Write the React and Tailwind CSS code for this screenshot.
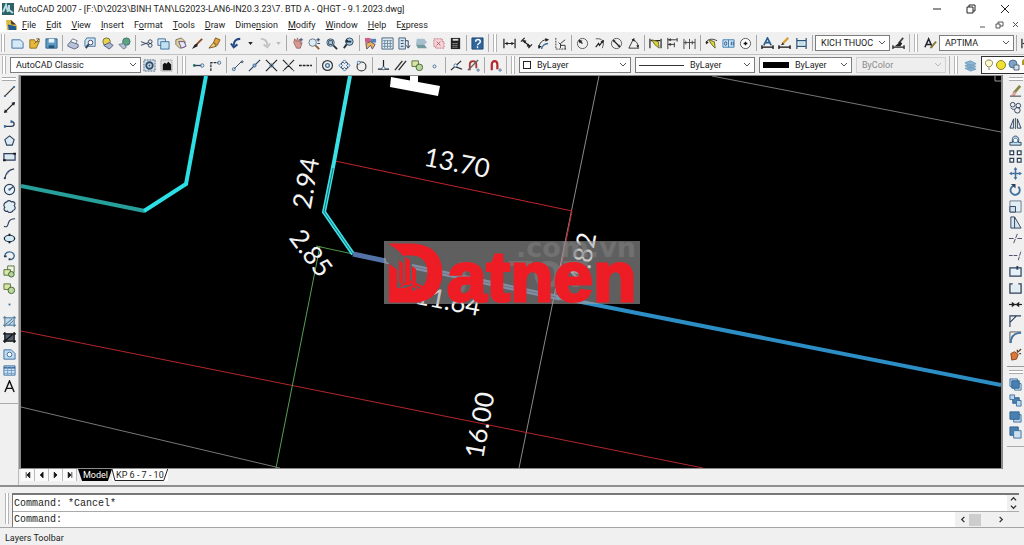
import React from "react";

const N = "#2b3f58";
const B = "#3f6f9f";
const L = "#bcd8ee";

const icons = {
  blank: <path d="M1 3h9l3 3v6H1z" fill="#d5e9f7" stroke={B} />,
  open: <><path d="M2 3h5l1 2h4l-3 7H2z" fill="#e6b93c" stroke="#8d6b1c" /><path d="M7 7l5-5M9 2h3v3" stroke="#6b5a20" /></>,
  save: <><path d="M1 2h12v10H1z" fill="#5e9bc4" stroke="#2d6189" /><path d="M4 2h6v4H4z" fill="#e8f3fa" /><path d="M4 9h6v3H4z" fill="#24557c" /></>,
  print: <><path d="M3 6l3-4 5 2-2 4z" fill="#fff" stroke="#66748c" /><path d="M1 8l3-3 8 3v3l-4 2-7-3z" fill="#b8c1d6" stroke="#5a6784" /></>,
  preview: <><path d="M3 1h9v9H1V4z" fill="#d3e6f5" stroke={B} /><circle cx="7" cy="6" r="2.5" fill="#fff" stroke="#446" /><path d="M5 8l-3 4" stroke="#345" strokeWidth="2" /></>,
  publish: <><circle cx="6" cy="5" r="4" fill="#e8d44c" stroke="#6b6f3c" /><path d="M3 9l6-3 4 3-4 4z" fill="#a9b6cf" stroke="#4c5873" /></>,
  globe: <><circle cx="9" cy="5" r="4" fill="#5aa57d" stroke="#3c6d7b" /><path d="M1 8l5-1 3 4-3 2z" fill="#b9c7d9" stroke="#62748c" /></>,
  cut: <><path d="M1 5l8 3M1 9l8-3" stroke={N} /><circle cx="11" cy="5" r="2" stroke={N} /><circle cx="11" cy="9" r="2" stroke={N} /></>,
  copy: <><path d="M1 2h8v7H1z" fill="#dcecf8" stroke={B} /><path d="M4 5h9v8H4z" fill="#c2e1ef" stroke={B} /></>,
  paste: <><path d="M2 3l6-2 4 4-1 6-5 1-4-4z" fill="#d9d49c" stroke="#77745c" /><path d="M5 5h6l2 5-5 2z" fill="#e1edf3" stroke="#748" /></>,
  brush: <><path d="M12 2L6 8" stroke="#8a4b22" strokeWidth="2" /><path d="M7 7l-3 1-3 5 6-3z" fill="#222" /></>,
  match: <><path d="M8 1l-2 5 4 3 3-6z" fill="#e0a33a" stroke="#85571c" /><path d="M6 6l-5 6 8-2z" fill="#f3d76c" stroke="#775020" /></>,
  undo: <path d="M11 2C6 2 4 5 4 9M1 7l3 4 4-3" stroke="#234a82" strokeWidth="2.2" />,
  redo: <path d="M3 2c5 0 7 3 7 7M13 7l-3 4-4-3" stroke="#c0c0c0" strokeWidth="2" />,
  pan: <><path d="M3 6l1-4 2 3 1-4 1 4 2-3v5l2-1-2 6H6z" fill="#d79a91" stroke="#a06a6a" /><path d="M11 1v4M9 3h4" stroke="#457" /></>,
  zoomrt: <><circle cx="5" cy="6" r="4" fill="#dcecf6" stroke="#678" /><path d="M8 9l4 4" stroke="#875f38" strokeWidth="2" /><path d="M9 3h4M11 1v4M10 7h3" stroke={N} /></>,
  zoomwin: <><circle cx="6" cy="6" r="4" fill="#b5d2e7" stroke="#456" /><path d="M9 9l4 4" stroke="#234" strokeWidth="2" /><path d="M4 4h4v4H4z" stroke="#345" /></>,
  zoomprev: <><circle cx="8" cy="5" r="4" fill="#aacbe4" stroke="#345" /><path d="M5 8l-3 4M4 5h6M4 5l2-2" stroke="#234" strokeWidth="2" /></>,
  props: <><path d="M1 1h6v5H1z" fill="#cf5f84" /><path d="M7 2h6v4H7z" fill="#5680b9" /><path d="M2 7l5-2 5 3-3 5-2-4-4 4z" fill="#e2b456" stroke="#644c72" /></>,
  grid: <><path d="M1 1h12v12H1z" fill="#e7eff5" stroke="#42607a" /><path d="M4 3v9M7 3v9M10 3v9M2 4h10M2 7h10M2 10h10" stroke="#6d8aa2" /></>,
  palette: <><path d="M1 1h7v12H1z" fill="#d5e5f1" stroke="#42607a" /><path d="M3 4h3M3 7h3M3 10h3M8 4h3v7M9 9l2 3 2-3" stroke={N} /></>,
  sheet: <><path d="M2 2h8l3 4-3 2H1z" fill="#a7bfce" /><path d="M1 8h9l3 4H3z" fill="#7299a0" /></>,
  markup: <><path d="M2 2h9v3h2v7H4v-2H2z" fill="#f4d3d6" stroke="#c37480" strokeDasharray="2 1" /><path d="M5 5l4 4M9 5L5 9" stroke="#b95a66" /></>,
  calc: <><path d="M2 1h10v12H2z" fill="#222" /><path d="M4 3h6" stroke="#ddd" strokeWidth="2" /><path d="M4 7h6M4 9h6M4 11h6" stroke="#ddd" strokeDasharray="1 1" /></>,
  help: <><path d="M1 1h12v12H1z" fill="#2f679d" stroke="#1c4573" /><path d="M5 5c0-3 5-3 5 0 0 2-3 2-3 4M7 10v2" stroke="#fff" strokeWidth="1.5" /></>,
  dimlin: <><path d="M1 2v10M13 2v10M2 7h10" stroke="#222" strokeWidth="1.3" /><path d="M2 7l3-2v4zM12 7L9 5v4z" fill="#222" /></>,
  dimali: <><path d="M1 5l4-4M9 12l4-4M3 4l8 6" stroke="#222" strokeWidth="1.3" /><path d="M3 3l4 1-2 3zM11 11L7 10l2-3z" fill="#222" /></>,
  dimarc: <><path d="M2 12C2 7 6 2 12 3" stroke="#222" /><path d="M5 13c0-3 3-6 7-6" stroke={B} strokeWidth="1.5" /><path d="M1 9l1 4 3-3zM13 3L9 1v4z" fill="#222" /></>,
  dimord: <><path d="M2 1v12h11" stroke="#333" strokeDasharray="2 1" /><path d="M7 12V7l5-4M5 6l3 3M7 9h5v4" stroke="#333" /></>,
  dimrad: <><circle cx="7" cy="7" r="5.5" stroke="#555" /><path d="M7 7L3 4" stroke="#222" strokeWidth="1.3" /><path d="M3 3l4 1-3 3z" fill="#222" /></>,
  dimjog: <><path d="M3 2c7-1 10 3 7 10" stroke="#555" /><path d="M3 11l3-4 1 2 4-5" stroke="#222" strokeWidth="1.3" /><path d="M12 3L8 5l3 2z" fill="#222" /></>,
  dimdia: <><circle cx="7" cy="7" r="5.5" stroke="#555" /><path d="M4 4l6 6" stroke="#222" strokeWidth="1.3" /><path d="M3 3l3 1-2 2zM11 11l-3-1 2-2z" fill="#222" /></>,
  dimang: <><path d="M7 2L2 12h11M6 3c4 1 6 4 6 8" stroke="#333" /><path d="M5 3l3-2v4zM12 12l-2-3h3z" fill="#222" /></>,
  qdim: <><path d="M1 2v10M13 2v10M2 4h10" stroke="#222" strokeWidth="1.3" /><path d="M3 3l7 2 1 7-5-4z" fill="#d8cf48" stroke="#6b6a22" /></>,
  dimbase: <path d="M2 1v12M2 3h10M2 8h7M12 1v4M9 6v5M3 3l2-1v2zM3 8l2-1v2z" stroke="#333" />,
  dimcont: <path d="M1 2v11M7 2v11M13 2v11M1 6h12M3 4v4M10 4v4" stroke="#444" />,
  leader: <><path d="M1 6c3-5 8-4 12-2" stroke="#333" /><path d="M4 3l6 2 1 7-4-4z" fill="#d8cf48" stroke="#6b6a22" /><path d="M1 8V4l3 2z" fill="#222" /></>,
  tol: <><path d="M1 3h12v8H1zM7 3v8" fill="#d3e8f8" stroke="#397ab0" /><ellipse cx="4" cy="7" rx="1.2" ry="2" stroke="#214d78" /><path d="M10 5v4M12 5v4" stroke="#214d78" /></>,
  center: <><circle cx="7" cy="7" r="5.5" fill="#fff" stroke="#555" /><path d="M7 5v4M5 7h4" stroke="#111" strokeWidth="1.4" /></>,
  dimedit: <><path d="M3 9l4-8 4 8M5 6h4" stroke="#2b5f8d" strokeWidth="1.8" /><path d="M1 9v4M13 9v4M1 11h12" stroke="#111" strokeWidth="1.4" /></>,
  dimtext: <><path d="M11 1L5 7" stroke="#d99f32" strokeWidth="2.5" /><path d="M5 6l2 2-4 1z" fill="#333" /><path d="M1 9v4M13 9v4M1 11h12" stroke="#111" strokeWidth="1.4" /></>,
  dimupd: <><path d="M2 1v12M12 1v12M2 4h10M2 10h10" stroke="#2b5375" strokeWidth="1.3" /><path d="M4 5h6v4H4z" fill="#c3ddeb" /></>,
  dimstyle: <><path d="M12 1L7 7" stroke="#444" strokeWidth="2" /><path d="M9 5l2 2-2 3H3z" fill="#222" /><path d="M1 9v4M13 9v4M1 11h12" stroke="#222" strokeWidth="1.4" /></>,
  textstyle: <><path d="M1 11L5 2l4 9M3 8h5" stroke="#223" strokeWidth="1.6" /><path d="M13 5l-6 7" stroke="#857b32" strokeWidth="2" /></>,
  gear: <><path d="M1 1h12v12H1z" fill="#d3dfe8" stroke="#4d6479" strokeDasharray="2 1" /><circle cx="7" cy="7" r="3.5" stroke="#2f516e" strokeWidth="2" /><circle cx="7" cy="7" r="1" fill="#2f516e" /></>,
  wsp: <><path d="M1 1h12v12H1z" fill="#e1e1e1" stroke="#888" strokeDasharray="1 1" /><path d="M3 6l2-2 2 1 2-2 3 3v6H3z" fill="#111" /></>,
  track: <><path d="M3 7h7" stroke="#335" strokeWidth="1.4" /><circle cx="2.5" cy="7" r="1.5" fill="#276" /><circle cx="11" cy="7" r="1.8" stroke={B} /></>,
  from: <><path d="M2 13V4h8" stroke="#333" strokeDasharray="3 1" strokeWidth="1.4" /><circle cx="11" cy="4" r="1.7" stroke={B} /></>,
  endp: <><path d="M3 11l8-8" stroke={N} /><circle cx="3" cy="11" r="1.6" stroke={B} /><circle cx="12" cy="3" r="1" stroke={N} /></>,
  midp: <><path d="M1 13L13 1" stroke={N} strokeWidth="1.3" /><circle cx="7" cy="7" r="1.7" fill="#8ab" stroke={B} /></>,
  inter: <><path d="M1 1l12 12M13 1L1 13" stroke="#222" strokeWidth="1.2" /><circle cx="7" cy="7" r="1.6" stroke={B} /></>,
  appint: <><path d="M1 1l12 12M13 1L1 13" stroke="#222" strokeDasharray="7 1" strokeWidth="1.2" /></>,
  ext: <path d="M0 7h14" stroke="#222" strokeDasharray="3 1" strokeWidth="1.4" />,
  cen: <><circle cx="7" cy="7" r="5.3" stroke="#333" strokeWidth="1.3" /><circle cx="7" cy="7" r="2" stroke={B} strokeWidth="1.4" /></>,
  quad: <><circle cx="7" cy="7" r="4" stroke="#333" /><path d="M7 1l2 2-2 2-2-2zM7 9l2 2-2 2-2-2zM1 7l2-2 2 2-2 2zM9 7l2-2 2 2-2 2z" fill="#eef" stroke={B} /></>,
  tan: <><circle cx="7" cy="8" r="4.8" stroke="#333" strokeWidth="1.2" /><circle cx="4" cy="4" r="1.6" fill="#fff" stroke={B} /></>,
  perp: <><path d="M7 1v9M1 11h12" stroke="#222" strokeWidth="1.3" /><circle cx="7" cy="10" r="1.6" fill="#fff" stroke={B} /></>,
  par: <path d="M1 12L9 2M5 12l8-10" stroke="#333" strokeWidth="1.5" />,
  ins: <><path d="M1 2h7v6H1z" fill="#d9e3a4" stroke="#56733a" /><circle cx="9" cy="9" r="3.5" fill="#bcd6a1" stroke="#41652f" /></>,
  node: <circle cx="7" cy="8" r="1.6" stroke={B} />,
  near: <><path d="M1 12L12 2M5 8l8 3" stroke="#222" strokeWidth="1.3" /><circle cx="6" cy="7" r="1.7" fill="#fff" stroke={B} /></>,
  none: <><path d="M3 12V6c0-5 7-5 7 0v4" stroke="#a93b2e" strokeWidth="2" /><path d="M1 12L12 1" stroke="#666" strokeWidth="1.5" /><circle cx="12" cy="12" r="1.2" stroke={B} /></>,
  magnet: <><path d="M3 12V6c0-5 6-5 6 0v5" stroke="#b22a2f" strokeWidth="2.4" /><circle cx="12" cy="12" r="1.2" stroke={B} /></>,
  layers: <path d="M1 4l6-2 6 3-6 3zM1 7l6-1 6 2-6 3zM1 10l6-1 6 2-6 2z" fill="#8db6d2" stroke="#6e9dbe" />,
  line: <><path d="M2 12L12 2" stroke="#333" strokeWidth="1.3" /><path d="M1 12h2M11 2h2" stroke={B} strokeWidth="2" /></>,
  xline: <><path d="M2 12L12 2" stroke="#222" strokeWidth="1.3" /><path d="M1 13l1-4 3 3zM13 1L9 2l3 3z" fill="#222" /></>,
  pline: <><path d="M2 10h7c4 0 4-5 0-5" stroke={N} strokeWidth="1.4" /><path d="M1 10h2M8 5h2" stroke={B} strokeWidth="3" /></>,
  poly: <path d="M7 2l5 4-2 6H4L2 6z" fill="#dceaf5" stroke={N} strokeWidth="1.2" />,
  rect: <><path d="M1 4h12v7H1z" fill="#dbe7f0" stroke={N} strokeWidth="1.3" /><path d="M0 11h3M11 4h3" stroke="#222" strokeWidth="2" /></>,
  arc: <><path d="M2 12C3 7 6 3 12 2" stroke={N} strokeWidth="1.2" /><circle cx="2" cy="12" r="1.2" fill={N} /><circle cx="5" cy="6" r="1" fill={B} /></>,
  circle: <><circle cx="7" cy="7" r="5.5" fill="#e9f2f8" stroke={N} strokeWidth="1.2" /><path d="M7 7l4-3" stroke={N} strokeWidth="1.3" /><circle cx="7" cy="7" r="1.3" fill={B} /></>,
  cloud: <path d="M4 2c2-2 4-1 5 0 3-1 5 2 3 4 2 2 1 5-1 5-1 3-5 3-6 1-3 1-5-2-3-4-2-2-1-5 2-6z" fill="#e1ecf4" stroke={N} strokeWidth="1.2" />,
  spline: <path d="M1 11c4 2 4-1 5-4s3-4 7-4" stroke={N} strokeWidth="1.2" />,
  ell: <><ellipse cx="7" cy="7" rx="5.5" ry="3.5" fill="#d1ebf4" stroke={N} strokeWidth="1.3" /><path d="M6 3h2M6 11h2M1 7h1M12 7h1" stroke="#111" strokeWidth="2" /></>,
  ellarc: <><path d="M2 8c0-7 11-6 10 0-1 3-3 4-5 3" stroke="#3b6c93" strokeWidth="1.5" /><path d="M1 8h3M6 11h2" stroke={N} strokeWidth="2" /></>,
  insert: <><path d="M5 1h7v7H5z" fill="#edf3dd" stroke="#587044" /><path d="M1 5h7v6H1z" fill="#dce7a9" stroke="#4b7035" /><circle cx="9" cy="10" r="3" fill="#b8d39a" stroke="#38602a" /></>,
  point: <path d="M6 6h2v2H6z" fill={B} />,
  hatch: <><path d="M2 3h10v8H2z" fill="#bfdaeb" /><path d="M0 3h14M0 11h14M2 1v12M12 1v12M3 10l7-6M6 11l5-5" stroke="#416a8b" /></>,
  grad: <><path d="M2 3h10v8H2z" fill="#536171" /><path d="M0 3h14M0 11h14M2 1v12M12 1v12M3 10l7-6" stroke="#111" strokeWidth="1.4" /></>,
  region: <><path d="M1 2h8l4 4v6H1z" fill="#bfdbf0" stroke={B} /><circle cx="7" cy="7" r="2.5" fill="#fff" stroke={B} /></>,
  table: <><path d="M1 2h12v10H1z" fill="#d8eafa" stroke={B} /><path d="M1 4h12" stroke={B} strokeWidth="2" /><path d="M5 3v9M9 3v9M1 7h12M1 10h12" stroke="#6f9dc5" /></>,
  mtext: <path d="M2 13L7 1l5 12M4 9h6" stroke="#111" strokeWidth="1.5" />,
  erase: <><path d="M12 1L5 9" stroke="#8a8445" strokeWidth="3" /><path d="M6 7l-4 4 4 1 2-3z" fill="#e3a3a0" /><path d="M1 12h12" stroke="#333" /></>,
  copyobj: <><circle cx="4" cy="4" r="2.5" stroke={N} /><circle cx="10" cy="5" r="2.5" stroke={N} /><circle cx="9" cy="10" r="3" stroke={N} /><path d="M2 7c1 2 2 2 4 2" stroke={N} /></>,
  mirror: <><path d="M5 2v10H1zM9 2v10h4z" fill="#d7e6ef" stroke={N} /><path d="M7 1v12" stroke="#555" /></>,
  offset: <><path d="M1 12h12V9H10c3-9-9-9-6 0H1z" fill="#c6e1ef" stroke={N} /><path d="M5 9c-2-6 6-6 4 0z" fill="#fff" stroke={B} /></>,
  array: <path d="M1 1h4v4H1zM9 1h4v4H9zM1 9h4v4H1zM9 9h4v4H9z" fill="#fff" stroke={N} strokeWidth="1.3" />,
  move: <><path d="M7 2v10M2 7h10" stroke={B} strokeWidth="1.6" /><path d="M7 0l2 3H5zM7 14l2-3H5zM0 7l3-2v4zM14 7l-3-2v4z" fill={B} /></>,
  rotate: <><path d="M5 3a5 5 0 1 0 5 1" stroke={B} strokeWidth="2" /><path d="M2 1h5v5z" fill={N} /></>,
  scale: <><path d="M1 1h12v12H1z" fill="#e3edf4" stroke="#66788a" /><path d="M1 7h6v6H1z" fill="#cfe2ef" stroke={N} /></>,
  stretch: <path d="M2 1h4v12H2zM6 1l7 12H6" fill="#d6e6f2" stroke={N} />,
  trim: <path d="M5 12L9 2M0 7h6M9 7h5" stroke="#446" strokeDasharray="5 1" />,
  extend: <path d="M10 12l3-10M0 7h10" stroke="#446" strokeDasharray="4 1" />,
  breakpt: <><path d="M1 3h12v9H1z" fill="#e6f1f8" stroke={N} strokeWidth="1.3" /><path d="M9 1v4" stroke={N} strokeWidth="2" /></>,
  brk: <><path d="M3 3h8v8H3z" fill="#e0edf5" /><path d="M4 2H1v10h12V2h-3" stroke={N} strokeWidth="1.4" /></>,
  join: <><path d="M0 7h14" stroke="#222" strokeWidth="1.3" /><path d="M3 4l4 3-4 3zM11 4L7 7l4 3z" fill="#222" /></>,
  chamfer: <path d="M1 13V1h12M1 8l7-7" stroke={N} strokeWidth="1.2" />,
  fillet: <><path d="M1 13V1h12" stroke="#555" /><path d="M2 13C2 6 6 2 13 2" stroke={B} strokeWidth="2" /></>,
  explode: <><path d="M2 6l4-2 4 3-2 5-5 1z" fill="#d87934" stroke="#87401f" /><path d="M9 5l4-4M9 2v2M11 6h2" stroke="#5b3a26" strokeWidth="1.4" /></>,
  front: <><path d="M1 1h8v8H1z" fill={L} stroke={B} /><path d="M6 6h7v7H6z" fill="#dcecf5" stroke={B} /><path d="M3 3h8v8H3z" fill="#4a80b0" stroke="#2f6391" /></>,
  back: <><path d="M4 4h7v6H4z" fill="#4a80b0" stroke="#2f6391" /><path d="M1 1h5v5H1zM8 7h5v6H8z" fill={L} stroke={B} /></>,
  above: <><path d="M5 5h8v8H5z" fill={L} stroke={B} /><path d="M1 2h10v8H1z" fill="#4a80b0" stroke="#2f6391" /></>,
  under: <><path d="M1 1h9v9H1z" fill="#4a80b0" stroke="#2f6391" /><path d="M5 5h8v8H5z" fill="#cbe1f1" stroke={B} /></>,
};

function Glyph({ name }) {
  return (
    <svg viewBox="0 0 14 14" fill="none" className="size-[13px] shrink-0" aria-hidden="true">
      {icons[name]}
    </svg>
  );
}

function Tool({ name }) {
  return (
    <button type="button" aria-label={name} className="flex h-4 w-[17px] shrink-0 items-center justify-center">
      <Glyph name={name} />
    </button>
  );
}

const Sep = () => <span className="mx-[2px] h-4 w-px shrink-0 bg-[#a8a8a8]" />;

const Grip = () => <span className="mx-1 h-[18px] w-1 shrink-0 border-x border-[#b5b5b5] bg-white" />;

function Tools({ list }) {
  return list.split(" ").map((name, i) => (name === "|" ? <Sep key={i} /> : <Tool key={i} name={name} />));
}

function Combo({ label, value, className, children, muted }) {
  return (
    <label className={`flex h-4 shrink-0 items-center gap-1 border px-[3px] ${muted ? "border-[#d0d0d0] bg-[#eeeeee] text-[#8a8a8a]" : "border-[#7d7d7d] bg-white text-[#222]"} ${className}`}>
      {children}
      <select aria-label={label} disabled={muted} className="min-w-0 flex-1 appearance-none bg-transparent pl-[2px] text-[9px] leading-3 outline-none">
        <option>{value}</option>
      </select>
      <svg viewBox="0 0 8 8" fill="none" stroke={muted ? "#bbb" : "#555"} className="size-2 shrink-0" aria-hidden="true">
        <path d="M1 2l3 3 3-3" />
      </svg>
    </label>
  );
}

const History = ({ color }) => (
  <button type="button" aria-label="History list" className="flex h-4 w-[11px] shrink-0 items-center justify-center">
    <svg viewBox="0 0 6 4" className="h-[3px] w-[5px]" aria-hidden="true"><path d="M0 0h6L3 4z" fill={color} /></svg>
  </button>
);

const menus = ["File", "Edit", "View", "Insert", "Format", "Tools", "Draw", "Dimension", "Modify", "Window", "Help", "Express"];
const hot = { Format: 1, Dimension: 4, Express: 1 };

function Menu({ name }) {
  const k = hot[name] ?? 0;
  return (
    <button type="button">
      {name.slice(0, k)}
      <span className="underline">{name[k]}</span>
      {name.slice(k + 1)}
    </button>
  );
}

function DimText({ x, y, angle, children }) {
  return (
    <text x={x} y={y + 9} transform={`rotate(${angle} ${x} ${y})`} textAnchor="middle" fontSize="26" fill="#f4f4f4">
      {children}
    </text>
  );
}

function Drawing() {
  return (
    <svg viewBox="21 76 980 392" preserveAspectRatio="xMidYMid slice" fill="none" fontFamily="Lato, sans-serif" className="block h-full w-full bg-black">
      <path d="M599 76L519 468" stroke="#8b8b8b" />
      <path d="M712 76L1001 132M21 407L280 468" stroke="#777" />
      <path d="M335 161L572 211L555 297" stroke="#c0252c" />
      <path d="M21 331L703 468" stroke="#b3262b" />
      <path d="M353 254L316 246" stroke="#4c9a4c" />
      <path d="M320 246L276 468" stroke="#55a055" />
      <path d="M21 186L145 211" stroke="#279f9a" strokeWidth="4" />
      <path d="M144 211L186 184L206 76" stroke="#2bdfe4" strokeWidth="4" />
      <path d="M350 76L334 162L324 212L353 254" stroke="#3be0e6" strokeWidth="4" />
      <path d="M333 168L324 212L353 254" stroke="#1e6d74" />
      <path d="M353 254L560 298" stroke="#5272a8" strokeWidth="5" />
      <path d="M400 264L560 298" stroke="#26344e" />
      <path d="M556 297L1001 385" stroke="#2c8ec4" strokeWidth="4" />
      <path d="M391 77L440 86L438 96L390 87zM410 76h8v8h-8z" fill="#fff" />
      <path d="M995 76v5h6" stroke="#999" />

      <DimText x={457} y={163} angle={11}>13.70</DimText>
      <DimText x={306} y={183} angle={-80}>2.94</DimText>
      <DimText x={311} y={253} angle={53}>2.85</DimText>
      <DimText x={448} y={301} angle={11}>11.64</DimText>
      <DimText x={583} y={258} angle={-80}>4.82</DimText>
      <DimText x={480} y={425} angle={-80}>16.00</DimText>

      <rect x="384" y="241" width="256" height="63" fill="#a3a3a3" opacity="0.58" />
      <g fontFamily="DejaVu Sans" fontWeight="700" fill="#808080" opacity="0.55">
        <text x="516" y="257" fontSize="27">.com.vn</text>
        <text x="508" y="287" fontSize="36">TOT</text>
        <text x="456" y="287" fontSize="34">J.</text>
      </g>
      <g fontFamily="Liberation Sans" fontWeight="700" fill="#ee1c25" stroke="#ee1c25" strokeWidth="3">
        <text x="385" y="301" fontSize="82">D</text>
        <text x="447" y="301" fontSize="71">atnen</text>
      </g>
      <path d="M386 243Q396 247 403 256H412V288H397V270L386 261z" fill="#5f5f5f" />
      <path d="M389 264L397 270V288H412V302H389z" fill="#ee1c25" />
      <path d="M399 260L403 263V286L399 282zM405 257L410 260V285H405zM412 266L416 269V283L412 280z" fill="#ee1c25" />
      <path d="M400 287L410 281L418 290M412 282L424 288M402 290L414 286" stroke="#ee1c25" strokeWidth="2" />
    </svg>
  );
}

const tabArrows = ["M3 1v8M8 1L4 5l4 4z", "M7 1L3 5l4 4z", "M3 1l4 4-4 4z", "M8 1v8M3 1l4 4-4 4z"];

export default function App() {
  return (
    <div className="flex h-screen min-h-[400px] flex-col overflow-hidden bg-[#f0f0f0] font-['Roboto','Noto_Sans',sans-serif] text-[#1c1c1c]">
      <header className="shrink-0 bg-white">
        <div className="flex h-[17px] items-center">
          <svg viewBox="0 0 12 12" className="ml-[2px] size-3" aria-hidden="true">
            <path d="M0 0h12v12H0z" fill="#2d6268" /><path d="M1 9l3-7 2 7M7 2v5l4 3" fill="none" stroke="#b7dde0" strokeWidth="2" />
          </svg>
          <h1 className="ml-[4px] flex-1 text-[9px] leading-4">AutoCAD 2007 - [F:\D\2023\BINH TAN\LG2023-LAN6-IN20.3.23\7. BTD A - QHGT - 9.1.2023.dwg]</h1>
          <div className="flex gap-6 pr-[14px]">
            {["M1 5h8", "M1 3h6v6H1zM3 3V1h6v6H7", "M1 1l8 8M9 1L1 9"].map((d, i) => (
              <button key={d} type="button" aria-label={["Minimize", "Restore", "Close"][i]}>
                <svg viewBox="0 0 10 10" fill="none" stroke="#222" className="size-[10px]"><path d={d} /></svg>
              </button>
            ))}
          </div>
        </div>
        <nav className="flex h-[15px] items-center">
          <svg viewBox="0 0 12 12" className="ml-[6px] size-[11px]" aria-hidden="true">
            <path d="M0 1h6l6 6v5H1z" fill="#e0b945" /><path d="M2 6l9 2v4H3z" fill="#245d92" /><path d="M5 1l6 5H6z" fill="#3c3c3c" />
          </svg>
          <div className="ml-[5px] flex flex-1 gap-[10px] text-[9px] leading-[14px]">
            {menus.map((m) => <Menu key={m} name={m} />)}
          </div>
          <div className="flex gap-[7px] pr-1">
            {["M1 7h5", "M1 4h4v4H1zM3 4V2h5v4H5", "M2 2l5 5M7 2L2 7"].map((d, i) => (
              <button key={d} type="button" aria-label={["Minimize drawing", "Restore drawing", "Close drawing"][i]}>
                <svg viewBox="0 0 9 9" fill="none" stroke="#555" className="size-[9px]"><path d={d} /></svg>
              </button>
            ))}
          </div>
        </nav>
      </header>

      <div className="flex h-[23px] shrink-0 items-center overflow-hidden border-b border-[#c2c2c2]">
        <span className="-ml-[3px] flex"><Grip /></span>
        <Tools list="blank open save | print preview publish globe | cut copy paste brush match | undo" />
        <History color="#222" />
        <Tool name="redo" />
        <History color="#bbb" />
        <Tools list="| pan zoomrt zoomwin zoomprev | props grid palette sheet markup calc | help" />
        <span className="ml-[2px] flex border-l border-[#b0b0b0]"><Grip /></span>
        <Tools list="dimlin dimali dimarc dimord | dimrad dimjog dimdia dimang | qdim dimbase dimcont | leader tol center | dimedit dimtext dimupd |" />
        <Combo label="Dimension style" value="KICH THUOC" className="w-[75px]" />
        <Tool name="dimstyle" />
        <span className="ml-[2px] flex border-l border-[#b0b0b0]"><Grip /></span>
        <Tool name="textstyle" />
        <Combo label="Text style" value="APTIMA" className="w-[75px]" />
        <Sep />
        <Tool name="dimlin" />
      </div>

      <div className="flex h-5 shrink-0 items-center overflow-hidden">
        <span className="-ml-[2px] flex"><Grip /></span>
        <Combo label="Workspace" value="AutoCAD Classic" className="w-[131px]" />
        <Tools list="gear wsp" />
        <span className="ml-[2px] flex border-l border-[#b0b0b0]"><Grip /></span>
        <Tools list="track from | endp midp inter appint ext | cen quad tan | perp par ins node | near none | magnet" />
        <span className="ml-[2px] flex border-l border-[#b0b0b0]"><Grip /></span>
        <div className="flex shrink-0 items-center gap-[4px]">
          <Combo label="Color" value="ByLayer" className="w-[112px]"><span className="size-2 border border-[#222]" /></Combo>
          <Combo label="Linetype" value="ByLayer" className="w-[120px]"><span className="h-px w-[45px] bg-[#333]" /></Combo>
          <Combo label="Lineweight" value="ByLayer" className="w-[93px]"><span className="h-[6px] w-[26px] bg-black" /></Combo>
          <Combo label="Plot style" value="ByColor" className="w-[90px]" muted />
        </div>
        <span className="ml-[3px] flex border-l border-[#b0b0b0]"><Grip /></span>
        <Tool name="layers" />
        <button type="button" aria-label="Layer states" className="ml-[2px] h-[18px] flex-1 overflow-hidden border border-r-0 border-[#333] bg-white">
          <svg viewBox="0 0 46 14" fill="none" className="h-[14px] w-[46px]" aria-hidden="true">
            <path d="M6 9C2 6 3 2 7 2s5 4 1 7zM6 11h2" fill="#fffbd0" stroke="#887f45" />
            <circle cx="19" cy="7" r="4.5" fill="#f0e233" stroke="#8c8424" />
            <circle cx="31" cy="6" r="4" fill="#7fa3c4" stroke="#4c7397" /><path d="M32 7h5v5h-5z" fill="#d4e4ef" stroke="#567" />
            <path d="M41 7V4c0-3 5-3 5 0" stroke="#a89624" strokeWidth="2" /><path d="M42 7h4v5h-4z" fill="#e8d44c" />
          </svg>
        </button>
      </div>

      <main className="flex min-h-0 flex-1">
        <aside className="flex w-[19px] shrink-0 flex-col items-center border-r border-[#bbb]">
          <span className="mt-[2px] h-1 w-[14px] shrink-0 border-y border-[#aaa] bg-white" />
          <div className="mt-[2px] flex h-[312px] shrink-0 flex-col justify-between">
            <Tools list="line xline pline poly rect arc circle cloud spline ell ellarc insert ins point hatch grad region table mtext" />
          </div>
          <span className="mt-2 h-px w-full bg-[#aaa]" />
        </aside>
        <section className="flex min-w-0 flex-1 flex-col">
          <div className="min-h-0 flex-1 border-2 border-y border-[#8a8a8a]"><Drawing /></div>
          <div className="flex h-[16px] shrink-0 items-start pl-[2px]">
            {tabArrows.map((d, i) => (
              <button key={d} type="button" aria-label={["First", "Previous", "Next", "Last"][i]} className="flex h-3 w-[14px] items-center justify-center border-r border-[#bbb] bg-[#fafafa]">
                <svg viewBox="0 0 11 10" fill="#111" stroke="#111" className="size-[8px]"><path d={d} /></svg>
              </button>
            ))}
            <div className="ml-px flex text-[9px] leading-3">
              <button type="button" className="h-3 bg-black pl-[5px] pr-1 text-white [clip-path:polygon(0_0,100%_0,88%_100%,12%_100%)]">Model</button>
              <button type="button" className="relative h-3 bg-white px-1">
                KP 6 - 7 - 10
                <svg viewBox="0 0 56 12" preserveAspectRatio="none" fill="none" stroke="#222" className="absolute inset-0 h-full w-full" aria-hidden="true"><path d="M0 0l3 11.5h49L56 0" /></svg>
              </button>
            </div>
          </div>
        </section>
        <aside className="flex w-[21px] shrink-0 flex-col items-center pl-1">
          <span className="mt-[2px] h-1 w-[14px] shrink-0 border-y border-[#aaa] bg-white" />
          <div className="mt-[2px] flex h-[279px] shrink-0 flex-col justify-between">
            <Tools list="erase copyobj mirror offset array move rotate scale stretch trim extend breakpt brk join chamfer fillet explode" />
          </div>
          <span className="mt-1 h-px w-full shrink-0 bg-[#999]" />
          <span className="mt-[3px] h-1 w-[14px] shrink-0 border-y border-[#aaa] bg-white" />
          <div className="mt-[2px] flex h-[65px] shrink-0 flex-col justify-between">
            <Tools list="front back above under" />
          </div>
          <span className="mt-[5px] h-px w-full shrink-0 bg-[#aaa]" />
        </aside>
      </main>

      <section className="flex h-[43px] shrink-0 border-b border-t-2 border-b-[#a5a5a5] border-t-[#8e8e8e] pt-[6px]">
        <span className="ml-[5px] mr-[3px] h-[31px] w-1 border-x border-[#b5b5b5] bg-white" />
        <div className="mr-[5px] flex flex-1 flex-col border-l border-t-2 border-[#777] bg-white font-['Liberation_Mono',monospace] text-[10px]">
          <div className="flex h-[17px] items-center border-b border-[#aaa] pl-px">
            <p className="flex-1">Command: *Cancel*</p>
            <div className="flex h-full w-3 flex-col items-center justify-between bg-[#f0f0f0] py-px">
              {["M1 5l3-3 3 3", "M1 3l3 3 3-3"].map((d, i) => (
                <button key={d} type="button" aria-label={["Scroll up", "Scroll down"][i]}>
                  <svg viewBox="0 0 8 8" fill="none" stroke="#333" strokeWidth="1.5" className="block size-[7px]"><path d={d} /></svg>
                </button>
              ))}
            </div>
          </div>
          <div className="flex h-[15px] items-center pl-px">
            <label htmlFor="cmd">Command:</label>
            <input id="cmd" className="h-3 min-w-0 flex-1 outline-none" />
            <div className="flex h-full w-16 items-center bg-[#f0f0f0] pl-[5px] pr-[15px]">
              <button type="button" aria-label="Scroll left"><svg viewBox="0 0 8 8" fill="none" stroke="#333" strokeWidth="1.5" className="size-[7px]"><path d="M5 1L2 4l3 3" /></svg></button>
              <span className="ml-[2px] h-3 w-3 bg-[#cdcdcd]" />
              <button type="button" aria-label="Scroll right" className="ml-auto"><svg viewBox="0 0 8 8" fill="none" stroke="#333" strokeWidth="1.5" className="size-[7px]"><path d="M3 1l3 3-3 3" /></svg></button>
            </div>
          </div>
        </div>
      </section>
      <footer className="flex h-[17px] shrink-0 items-center pl-[5px] pt-[3px] text-[9px] leading-3">Layers Toolbar</footer>
    </div>
  );
}
